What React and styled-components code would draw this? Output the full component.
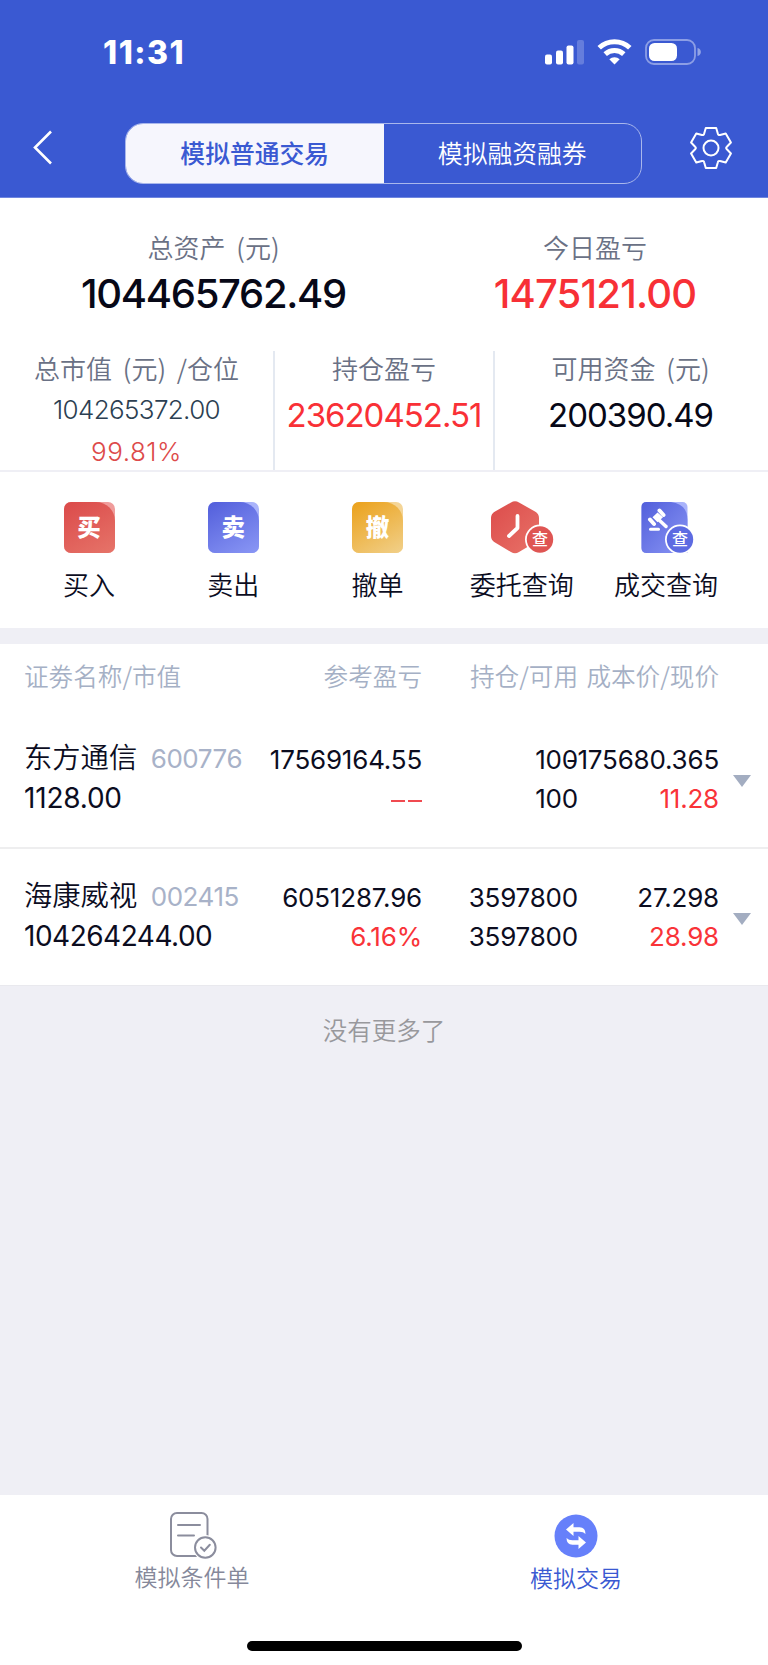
import React from 'react'
import styled, { createGlobalStyle } from 'styled-components'

const GlobalStyle = createGlobalStyle`
  * {
    box-sizing: border-box;
  }

  body {
    margin: 0;
    background: #efeff5;
    font-family: Inter, 'Noto Sans CJK SC', sans-serif;
    color: #0c0d1f;
  }
`

const Screen = styled.div`
  width: 768px;
  height: 1665px;
  display: flex;
  flex-direction: column;
  background: #efeff5;
  overflow: hidden;
`

const Header = styled.header`
  height: 198px;
  background: #3a59d2;
  border-bottom: 1px solid #6f86df;
  color: #fff;
`

const StatusBar = styled.div`
  height: 105px;
  padding: 0 66px 0 103px;
  display: flex;
  align-items: center;
  justify-content: space-between;
`

const Time = styled.div`
  font-size: 32px;
  font-weight: 800;
  letter-spacing: 1.5px;
`

const NavBar = styled.nav`
  padding: 18px 36px 0 33px;
  display: flex;
  align-items: flex-start;
  justify-content: space-between;

  > svg {
    margin-top: 4px;
  }
`

const Segment = styled.div`
  width: 517px;
  height: 61px;
  margin-right: -24px;
  display: flex;
  border: 1px solid #a9b7ec;
  border-radius: 18px;
  overflow: hidden;
`

const SegmentItem = styled.div`
  flex: 1;
  font-size: 24.8px;
  line-height: 61px;
  text-align: center;
  font-weight: ${p => p.active ? 500 : 350};
  color: ${p => p.active ? '#3a59d2' : '#fff'};
  background: ${p => p.active ? '#f6f6fd' : 'transparent'};
`

const Hero = styled.section`
  height: 153px;
  padding-top: 31.5px;
  display: grid;
  grid-template-columns: 427px 336px;
  background: #fff;
  text-align: center;
`

const Label = styled.div`
  font-family: 'Noto Sans CJK SC', sans-serif;
  font-size: 26px;
  font-weight: 350;
  line-height: 34px;
  word-spacing: 5px;
  white-space: nowrap;
  color: #6a7185;
`

const HeroValue = styled.div`
  margin-top: 8px;
  font-size: 40px;
  font-weight: 500;
  line-height: 44px;
  letter-spacing: ${p => p.spacing}px;
  color: ${p => p.red ? '#f73036' : '#070817'};
`

const Stats = styled.section`
  height: 121px;
  display: grid;
  grid-template-columns: 275px 220px 271px;
  background: #fff;
  border-bottom: 2px solid #efeff5;
  text-align: center;
`

const Stat = styled.div`
  border-right: ${p => p.last ? 'none' : '2px solid #e4e9f1'};
`

const StatValue = styled.div`
  margin-top: 10px;
  font-size: 33px;
  line-height: 40px;
  letter-spacing: -1px;
  color: ${p => p.red ? '#f93036' : '#070817'};
`

const StatSmall = styled.div`
  margin-top: 10px;
  font-size: 26px;
  font-weight: 300;
  line-height: 29px;
  letter-spacing: -0.65px;
  color: #2c3f52;
`

const StatPercent = styled.div`
  margin-top: 13px;
  font-size: 26px;
  font-weight: 300;
  line-height: 30px;
  letter-spacing: 0.5px;
  color: #dd4a4a;
`

const Actions = styled.section`
  height: 156px;
  padding: 30px 30px 0 17px;
  display: grid;
  grid-template-columns: repeat(5, 1fr);
  background: #fff;
`

const Action = styled.div`
  display: flex;
  flex-direction: column;
  align-items: center;
`

const ActionLabel = styled(Label)`
  margin-top: 12px;
  line-height: 36px;
  color: #0c0d1f;
`

const IconBox = styled.div`
  height: 52px;
  display: flex;

  svg {
    margin-top: -2px;
  }
`

const Tile = styled.div`
  width: 51px;
  height: 51px;
  border-radius: 7px;
  overflow: hidden;
  background: ${p => p.corner};
`

const TileFace = styled.div`
  height: 51px;
  border-top-right-radius: 19px;
  background: linear-gradient(150deg, ${p => p.from}, ${p => p.to});
  color: #fff;
  font-size: 23.5px;
  font-weight: 800;
  line-height: 52px;
  text-align: center;
`

const Holdings = styled.section`
  margin-top: 16px;
  background: #fff;
`

const Columns = styled.div`
  display: grid;
  grid-template-columns: 227px 171px 156px 141px 32px;
  padding-left: 24px;
`

const TableHead = styled(Columns)`
  height: 67px;
  font-family: 'Noto Sans CJK SC', sans-serif;
  font-size: 24.6px;
  font-weight: 350;
  line-height: 63px;
  color: #a5b0c5;
`

const HeadCell = styled.div`
  white-space: nowrap;
  text-align: ${p => p.left ? 'left' : 'right'};
`

const Row = styled(Columns)`
  height: 138px;
  border-bottom: 2px solid #eeeeef;

  &:last-child {
    height: 137px;
    border-bottom: 1px solid #e9e9ee;
  }
`

const NameCell = styled.div`
  padding-top: 27px;
  line-height: 40px;
  font-size: 28px;
  white-space: nowrap;
`

const StockName = styled.span`
  font-size: 28.3px;
  font-weight: 350;
`

const Code = styled.span`
  margin-left: 13.5px;
  font-size: 26px;
  letter-spacing: -0.45px;
  color: #a8b2c8;
`

const MarketValue = styled.div`
  margin-top: -1px;
  letter-spacing: ${p => p.spacing}px;
`

const NumberCell = styled.div`
  padding-top: 29px;
  display: flex;
  flex-direction: column;
  align-items: flex-end;
  font-size: 26px;
  line-height: 39px;
  letter-spacing: -0.2px;
  white-space: nowrap;
`

const Red = styled.span`
  color: #f93338;
`

const Dashes = styled.div`
  display: flex;
  gap: 3px;
  padding-top: 21px;

  i {
    width: 14px;
    height: 2px;
    background: #f04a50;
  }
`

const Caret = styled.div`
  align-self: center;
  justify-self: end;
  margin-top: 3px;
  border: 9.5px solid transparent;
  border-top: 12px solid #a3adc1;
  border-bottom: 0;
`

const NoMore = styled.div`
  font-family: 'Noto Sans CJK SC', sans-serif;
  font-size: 24.5px;
  font-weight: 350;
  line-height: 87px;
  text-align: center;
  color: #98989c;
`

const TabBar = styled.footer`
  height: 170px;
  margin-top: auto;
  padding: 14px 0;
  display: flex;
  flex-direction: column;
  justify-content: space-between;
  align-items: center;
  background: #fff;
`

const Tabs = styled.div`
  width: 100%;
  display: grid;
  grid-template-columns: 1fr 1fr;
`

const Tab = styled.div`
  display: flex;
  flex-direction: column;
  align-items: center;
  font-size: 23px;
  font-weight: 350;
  line-height: ${p => p.active ? 39 : 37}px;
  color: ${p => p.active ? '#3a59d2' : '#85889a'};
`

const HomeIndicator = styled.div`
  width: 275px;
  height: 10px;
  border-radius: 5px;
  background: #000;
`

const StatusIcons = () => (
  <svg width="158" height="28" viewBox="0 0 158 28" fill="#fff">
    <rect x="1" y="15.5" width="7" height="10" rx="2" />
    <rect x="12" y="11.5" width="7" height="14" rx="2" />
    <rect x="22.5" y="6.5" width="7" height="19" rx="2" />
    <rect x="33" y="1" width="7" height="24.5" rx="2" opacity="0.22" />
    <g fill="none" stroke="#fff" strokeWidth="5">
      <path d="M55.2 8.8a22.3 22.3 0 0 1 30.6 0" />
      <path d="M61.2 15.1a13.6 13.6 0 0 1 18.6 0" />
    </g>
    <path d="M70.5 25.4l-5.2-5.2a7.6 7.6 0 0 1 10.4 0z" />
    <rect x="102" y="1" width="49" height="24" rx="8" fill="none" stroke="#fff" strokeWidth="1.8" opacity="0.42" />
    <rect x="105" y="4" width="28" height="18" rx="5.5" />
    <path d="M153.5 9c4.5 1 4.5 7 0 8z" opacity="0.45" />
  </svg>
)

const BackIcon = () => (
  <svg width="20" height="42" viewBox="0 0 20 42" fill="none" stroke="#fff" strokeWidth="2.6">
    <path d="M18 4.5L2 20.5l16 16" />
  </svg>
)

// six teeth, each one the same outline turned by 60 degrees
const gearPath = [0, 60, 120, 180, 240, 300].map((deg, i) => {
  const a = deg * Math.PI / 180
  const at = (x, y) => `${(x * Math.cos(a) - y * Math.sin(a)).toFixed(2)} ${(x * Math.sin(a) + y * Math.cos(a)).toFixed(2)}`
  return `${i ? 'Q' + at(-7.2, -12.5) + ' ' : 'M'}${at(-6.8, -14.4)}L${at(-5.2, -20)}L${at(5.2, -20)}L${at(6.8, -14.4)}`
}).join('') + 'Q-7.2 -12.5 -6.8 -14.4Z'

const GearIcon = () => (
  <svg width="42" height="42" viewBox="-21 -21 42 42" fill="none" stroke="#fff" strokeWidth="2" strokeLinejoin="round">
    <path d={gearPath} />
    <circle r="7.5" />
  </svg>
)

const QueryBadge = ({ x, fill }) => (
  <g>
    <circle cx={x} cy="39.5" r="15" fill="#fff" />
    <circle cx={x} cy="39.5" r="13.2" fill={fill} />
    <text x={x} y="45.3" fill="#fff" fontSize="16" fontWeight="500" textAnchor="middle">查</text>
  </g>
)

const OrderQueryIcon = () => (
  <svg width="66" height="56" viewBox="0 0 66 56">
    <linearGradient id="order" x1="0" y1="0" x2="1" y2="1">
      <stop offset="0" stopColor="#dc4c4b" />
      <stop offset="1" stopColor="#e87268" />
    </linearGradient>
    <path d="M22 2.5q4-2.5 8 0L46 11.5q4 2.3 4 6.5V36q0 4.2-4 6.5L30 52q-4 2.5-8 0L6 42.5Q2 40.2 2 36V18q0-4.2 4-6.5z" fill="url(#order)" />
    <path d="M28.500 16v12l-8.500 8" fill="none" stroke="#fff" strokeWidth="3.8" strokeLinecap="round" strokeLinejoin="round" />
    <QueryBadge x={51} fill="#df5553" />
  </svg>
)

const DealQueryIcon = () => (
  <svg width="66" height="56" viewBox="0 0 66 56">
    <linearGradient id="deal" x1="0" y1="0" x2="1" y2="1">
      <stop offset="0" stopColor="#525fdb" />
      <stop offset="1" stopColor="#8995f4" />
    </linearGradient>
    <rect x="8.5" y="2" width="46" height="51" rx="5" fill="#a9b3fb" />
    <path d="M13.5 2H38q16.5 2 16.5 18v33h-41q-5 0-5-5V7q0-5 5-5z" fill="url(#deal)" />
    <g stroke="#fff" strokeWidth="4" strokeLinecap="round">
      <path d="M26.5 10.5l4 4.5M17 19.5l4 4.5" />
      <path d="M24 18l9 8.5" strokeWidth="3.5" />
      <path d="M17.5 29.3h8" strokeWidth="3" />
    </g>
    <path d="M24.5 12.5l-5 4.8 5 5 5.5-5z" fill="#fff" />
    <QueryBadge x={47} fill="#5d6be2" />
  </svg>
)

const ConditionIcon = () => (
  <svg width="70" height="51" viewBox="0 0 70 51" fill="none" stroke="#8b8d9d" strokeWidth="2" strokeLinecap="round">
    <rect x="14" y="4" width="36.5" height="43" rx="6" />
    <path d="M21 16h22M21 26.5h16" />
    <circle cx="48.3" cy="38.5" r="12.5" fill="#fff" stroke="none" />
    <circle cx="48.3" cy="38.5" r="10.3" />
    <path d="M44 38.5l3.3 3.3 5.5-6" />
  </svg>
)

const swapArrow = 'M25 20.5l7.5-6.5v4.3h6q6 .2 6 6.7-2-2.3-6-2.3h-6v4.3z'

const SwapIcon = () => (
  <svg width="70" height="51" viewBox="0 0 70 51">
    <circle cx="35" cy="27" r="21.5" fill="#6680fa" />
    <path d={swapArrow} fill="#fff" />
    <path d={swapArrow} fill="#fff" transform="rotate(180 35 27)" />
  </svg>
)

const tiles = [
  { char: '买', label: '买入', from: '#db4a4a', to: '#e67469', corner: '#f09c9b' },
  { char: '卖', label: '卖出', from: '#525edb', to: '#8a97f5', corner: '#aab4fb' },
  { char: '撤', label: '撤单', from: '#eba11a', to: '#f1d08a', corner: '#f4d597' },
]

const stocks = [
  {
    name: '东方通信',
    code: '600776',
    value: '1128.00',
    spacing: -0.2,
    profit: '17569164.55',
    rate: null,
    held: '100',
    usable: '100',
    cost: '-175680.365',
    price: '11.28',
  },
  {
    name: '海康威视',
    code: '002415',
    value: '104264244.00',
    spacing: -0.5,
    profit: '6051287.96',
    rate: '6.16%',
    held: '3597800',
    usable: '3597800',
    cost: '27.298',
    price: '28.98',
  },
]

const StockRow = ({ stock }) => (
  <Row>
    <NameCell>
      <StockName>{stock.name}</StockName>
      <Code>{stock.code}</Code>
      <MarketValue spacing={stock.spacing}>{stock.value}</MarketValue>
    </NameCell>
    <NumberCell>
      <span>{stock.profit}</span>
      {stock.rate ? <Red>{stock.rate}</Red> : <Dashes><i /><i /></Dashes>}
    </NumberCell>
    <NumberCell>
      <span>{stock.held}</span>
      <span>{stock.usable}</span>
    </NumberCell>
    <NumberCell>
      <span>{stock.cost}</span>
      <Red>{stock.price}</Red>
    </NumberCell>
    <Caret />
  </Row>
)

const App = () => (
  <Screen>
    <GlobalStyle />
    <Header>
      <StatusBar>
        <Time>11:31</Time>
        <StatusIcons />
      </StatusBar>
      <NavBar>
        <BackIcon />
        <Segment>
          <SegmentItem active>模拟普通交易</SegmentItem>
          <SegmentItem>模拟融资融券</SegmentItem>
        </Segment>
        <GearIcon />
      </NavBar>
    </Header>

    <Hero>
      <div>
        <Label>总资产 (元)</Label>
        <HeroValue spacing={-1.3}>104465762.49</HeroValue>
      </div>
      <div>
        <Label>今日盈亏</Label>
        <HeroValue red spacing={-0.8}>1475121.00</HeroValue>
      </div>
    </Hero>

    <Stats>
      <Stat>
        <Label>总市值 (元) /仓位</Label>
        <StatSmall>104265372.00</StatSmall>
        <StatPercent>99.81%</StatPercent>
      </Stat>
      <Stat>
        <Label>持仓盈亏</Label>
        <StatValue red>23620452.51</StatValue>
      </Stat>
      <Stat last>
        <Label>可用资金 (元)</Label>
        <StatValue>200390.49</StatValue>
      </Stat>
    </Stats>

    <Actions>
      {tiles.map(tile => (
        <Action key={tile.char}>
          <IconBox>
            <Tile corner={tile.corner}>
              <TileFace from={tile.from} to={tile.to}>{tile.char}</TileFace>
            </Tile>
          </IconBox>
          <ActionLabel>{tile.label}</ActionLabel>
        </Action>
      ))}
      <Action>
        <IconBox><OrderQueryIcon /></IconBox>
        <ActionLabel>委托查询</ActionLabel>
      </Action>
      <Action>
        <IconBox><DealQueryIcon /></IconBox>
        <ActionLabel>成交查询</ActionLabel>
      </Action>
    </Actions>

    <Holdings>
      <TableHead>
        <HeadCell left>证劵名称/市值</HeadCell>
        <HeadCell>参考盈亏</HeadCell>
        <HeadCell>持仓/可用</HeadCell>
        <HeadCell>成本价/现价</HeadCell>
      </TableHead>
      {stocks.map(stock => <StockRow key={stock.code} stock={stock} />)}
    </Holdings>
    <NoMore>没有更多了</NoMore>

    <TabBar>
      <Tabs>
        <Tab>
          <ConditionIcon />
          模拟条件单
        </Tab>
        <Tab active>
          <SwapIcon />
          模拟交易
        </Tab>
      </Tabs>
      <HomeIndicator />
    </TabBar>
  </Screen>
)

export default App
